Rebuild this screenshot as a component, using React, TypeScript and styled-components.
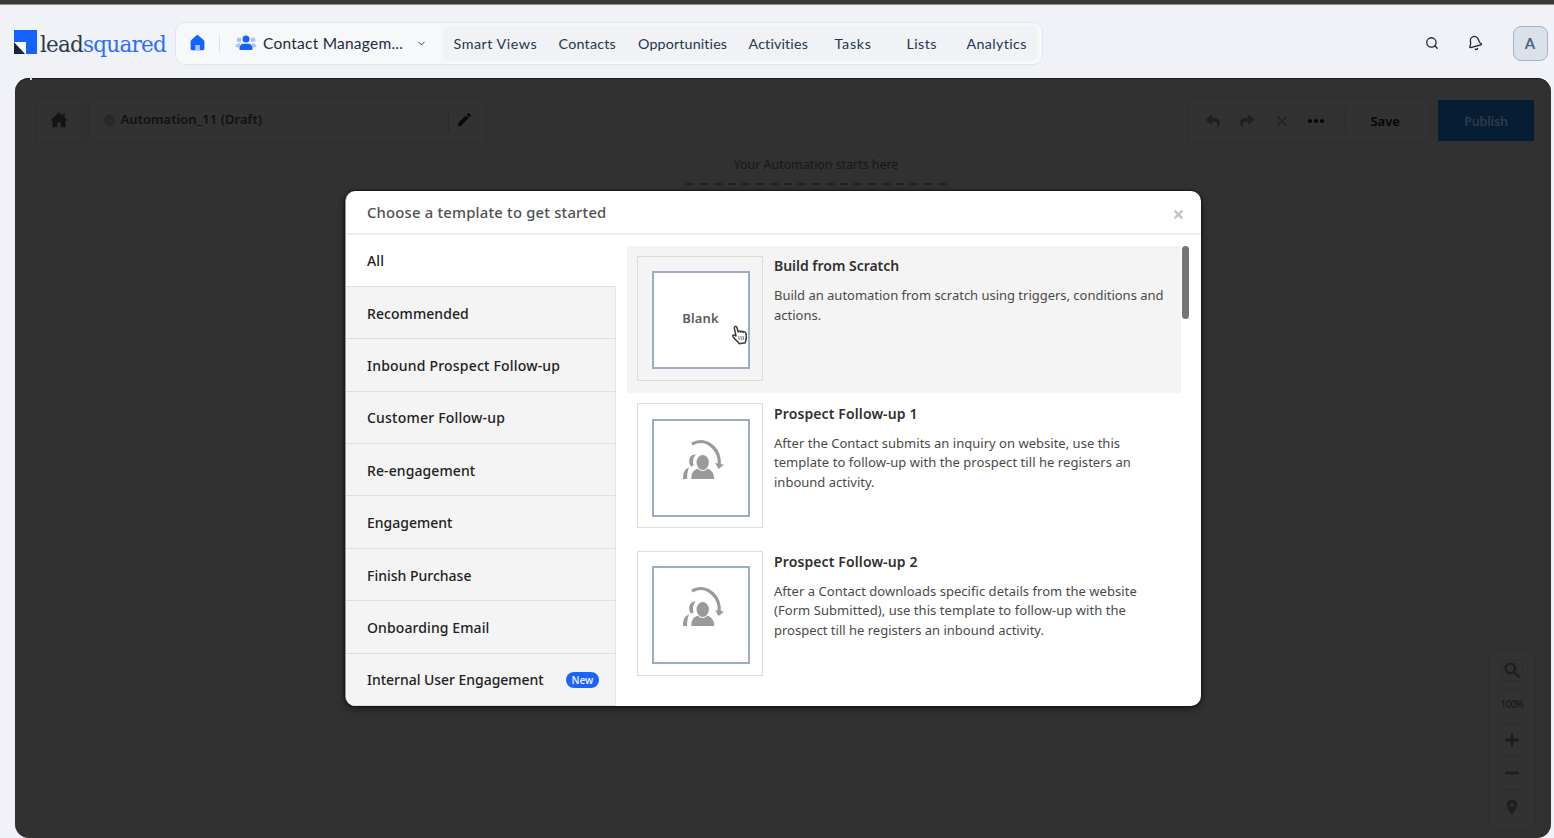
import React from "react";
import styled, { createGlobalStyle } from "styled-components";
import { FaMinus, FaPlus, FaReply, FaShare, FaTimes } from "react-icons/fa";
import { MdClose, MdEdit, MdLocationOn, MdMoreHoriz, MdSearch } from "react-icons/md";
import { Bell, ChevronDown, Search } from "lucide-react";

const GlobalStyle = createGlobalStyle`
  *, *::before, *::after { box-sizing: border-box; }
  body {
    margin: 0;
    background: #f0f2f7;
    font-family: "Noto Sans", sans-serif;
    overflow: hidden;
  }
  svg { display: block; flex: none; }
`;

const Page = styled.div`
  position: relative;
  display: flex;
  flex-direction: column;
  width: 1554px;
  height: 838px;
  background: #f0f2f7;
  border-top: 4px solid #3a3839;
  box-shadow: inset 0 1px 0 #8b8d8f;
`;

const Header = styled.header`
  display: flex;
  align-items: center;
  height: 73.5px;
  padding: 5px 6.5px 0 14px;
`;

const Logo = styled.div`
  display: flex;
  align-items: center;
  width: 161px;
  height: 44px;
  padding-bottom: 3px;
`;

const Wordmark = styled.span`
  margin: 6px 0 0 3px;
  font: 21.5px/26px "DejaVu Serif", serif;
  letter-spacing: -0.77px;
  white-space: nowrap;
  color: #2c3a4c;
  em { font-style: normal; color: #2d6ef7; }
`;

const NavBar = styled.nav`
  display: flex;
  align-items: center;
  width: 868px;
  height: 43px;
  padding: 0 4px 0 14px;
  border: 1.5px solid #e0e5ee;
  border-radius: 10px;
  background: #f7f8fa;
  font-family: Lato, "Noto Sans", sans-serif;
  color: #1e2a3c;
`;

const NavSeparator = styled.span`
  width: 1px;
  height: 17px;
  margin: 0 15px 0 14px;
  background: #dadfe9;
`;

const Workspace = styled.span`
  width: 142px;
  margin: 0 11px 0 6px;
  font-size: 15.5px;
  letter-spacing: 0.24px;
  white-space: nowrap;
`;

const NavLinks = styled.div`
  display: flex;
  align-items: center;
  width: 596px;
  height: 35px;
  margin-left: auto;
  padding: 0 0 0 11.5px;
  border-radius: 6px;
  background: #f0f2f6;
`;

const NavLink = styled.a<{ $width: number; $spacing: number }>`
  width: ${(p) => p.$width}px;
  font-size: 14.3px;
  letter-spacing: ${(p) => p.$spacing}px;
  white-space: nowrap;
  color: #26364b;
`;

const HeaderActions = styled.div`
  display: flex;
  align-items: center;
  gap: 28px;
  margin-left: auto;
  color: #1a2536;
`;

const BellTilt = styled.span`
  transform: rotate(-14deg);
`;

const Avatar = styled.div`
  display: flex;
  align-items: center;
  justify-content: center;
  width: 35px;
  height: 35px;
  margin-left: 2px;
  border: 1.5px solid #a3b3c8;
  border-radius: 8px;
  background: #d9e1ea;
  font: 700 15px Lato, sans-serif;
  color: #4d6485;
`;

const Canvas = styled.main`
  position: relative;
  display: flex;
  flex-direction: column;
  width: 1536.5px;
  height: 760.5px;
  margin-left: 14.5px;
  padding: 22px 17px 10px 22px;
  border-radius: 14px;
  background: #313131;
  box-shadow: inset 0 1px 1px #1e1e1e;
  color: #1b1b1b;
`;

const Notch = styled.span`
  position: absolute;
  top: -1px;
  left: 15.5px;
  width: 2px;
  height: 3px;
  background: #d5d6d8;
`;

const Toolbar = styled.div`
  display: flex;
  align-items: flex-start;
`;

const DarkBox = styled.div<{ $width: number }>`
  display: flex;
  align-items: center;
  width: ${(p) => p.$width}px;
  height: 42px;
  background: #323232;
  box-shadow: 0 0 2px #292929;
`;

const HomeBox = styled(DarkBox)`
  justify-content: center;
  margin-right: 9px;
  padding-bottom: 2px;
`;

const NameBox = styled(DarkBox)`
  padding-left: 14px;
`;

const StatusDot = styled.span`
  width: 11px;
  height: 11px;
  margin-right: 6px;
  border: 1px solid #252525;
  border-radius: 50%;
  background: #292929;
`;

const AutomationName = styled.span`
  flex: 1;
  font-size: 13px;
  font-weight: 600;
  letter-spacing: 0.05px;
  padding-bottom: 3px;
  color: #111;
`;

const Divider = styled.span<{ $height: number }>`
  width: 1px;
  height: ${(p) => p.$height}px;
  background: #282828;
`;

const PencilSlot = styled.span`
  width: 36px;
  padding: 0 0 3px 7px;
  color: #090909;
`;

const ActionBox = styled(DarkBox)`
  margin-left: auto;
  padding-left: 7px;
  color: #202020;
`;

const ActionIcon = styled.span<{ $strong?: boolean }>`
  display: flex;
  justify-content: center;
  width: 34.3px;
  padding-top: 1px;
  color: ${(p) => (p.$strong ? "#050505" : "inherit")};
`;

const MenuDivider = styled(Divider)`
  margin-left: 12px;
`;

const SaveButton = styled.button`
  width: 78px;
  padding: 0;
  border: 0;
  background: none;
  font: 600 13px "Noto Sans", sans-serif;
  letter-spacing: 0;
  color: #050505;
`;

const PublishButton = styled.button`
  width: 96px;
  height: 41px;
  margin-left: 10px;
  padding: 2px 0 0;
  border: 0;
  background: #071d33;
  font: 600 12.5px "Noto Sans", sans-serif;
  letter-spacing: -0.15px;
  color: #2d3b49;
`;

const StartArea = styled.div`
  display: flex;
  flex-direction: column;
  align-items: center;
  width: 261px;
  margin: 14px 0 0 649px;
  font-size: 12.5px;
  line-height: 18px;
  letter-spacing: -0.05px;
  color: #171717;
`;

const StartSlot = styled.div`
  width: 261px;
  height: 40px;
  margin-top: 9.5px;
  background: repeating-linear-gradient(90deg, #202020 0 8px, transparent 8px 14px) 0 0 / 100% 2px no-repeat;
`;

const ZoomBox = styled.div`
  display: flex;
  flex-direction: column;
  align-items: center;
  justify-content: space-between;
  align-self: flex-end;
  width: 44px;
  height: 178px;
  margin-top: auto;
  padding: 10px 0 12px;
  background: #323232;
  box-shadow: 0 0 2px #292929;
  color: #1e1e1e;
`;

const ZoomRule = styled.span`
  width: 16px;
  height: 1px;
  background: #2b2b2b;
`;

const ZoomLevel = styled.span`
  padding-bottom: 4px;
  font-size: 10px;
  line-height: 13px;
  letter-spacing: -0.6px;
  color: #151515;
`;

const Modal = styled.section`
  position: absolute;
  top: 186.5px;
  left: 345px;
  display: flex;
  flex-direction: column;
  width: 855.5px;
  height: 515.5px;
  border-left: 1px solid #999;
  border-radius: 10px;
  background: #fff;
  box-shadow: 0 0 3px #000, 0 3px 8px rgba(0, 0, 0, 0.4);
  overflow: hidden;
`;

const ModalHeader = styled.div`
  display: flex;
  align-items: center;
  justify-content: space-between;
  height: 44px;
  padding: 0 16px 0 21px;
  border-bottom: 2px solid #ededed;
  color: #c4c4c4;
`;

const ModalTitle = styled.h1`
  margin: 1px 0 0;
  font-size: 14.8px;
  font-weight: 500;
  letter-spacing: 0.2px;
  color: #505050;
`;

const CloseSlot = styled.span`
  padding-top: 6px;
`;

const ModalBody = styled.div`
  display: flex;
  flex: 1;
  min-height: 0;
`;

const Categories = styled.ul`
  display: grid;
  grid-auto-rows: 1fr;
  width: 270px;
  margin: 0;
  padding: 0;
  list-style: none;
`;

const Category = styled.li<{ $active?: boolean; $spacing: number }>`
  display: flex;
  align-items: center;
  justify-content: space-between;
  padding: 1px 16px 0 21px;
  border-right: 1px solid ${(p) => (p.$active ? "#fff" : "#e4e4e4")};
  border-bottom: 1px solid #dedede;
  background: ${(p) => (p.$active ? "#fff" : "#f4f4f4")};
  font-size: 14px;
  font-weight: 500;
  letter-spacing: ${(p) => p.$spacing}px;
  white-space: nowrap;
  color: #222;
`;

const NewBadge = styled.span`
  width: 33px;
  height: 16px;
  border-radius: 8px;
  background: #1c64f9;
  font-size: 10px;
  font-weight: 600;
  line-height: 16px;
  text-align: center;
  color: #e4edff;
`;

const Templates = styled.div`
  flex: 1;
  display: flex;
  align-items: flex-start;
  padding: 11px 0 0 11px;
`;

const TemplateList = styled.div`
  width: 554px;
`;

const ScrollThumb = styled.span`
  width: 7px;
  height: 73px;
  margin-left: 0.5px;
  border-radius: 4px;
  background: #757575;
`;

const Template = styled.article<{ $active?: boolean }>`
  display: flex;
  height: 147px;
  margin-bottom: 0.7px;
  padding: 10px 0 0 10px;
  background: ${(p) => (p.$active ? "#f4f4f4" : "#fff")};
`;

const Thumb = styled.div`
  display: flex;
  align-items: center;
  justify-content: center;
  flex: none;
  width: 126px;
  height: 125px;
  margin-right: 11px;
  padding: 4px 0 0 1px;
  border: 1px solid #dcdcdc;
`;

const ThumbFrame = styled.div`
  position: relative;
  display: flex;
  align-items: center;
  justify-content: center;
  width: 98px;
  height: 98px;
  border: 2px solid #9aadc4;
  background: #fff;
  font-size: 13px;
  font-weight: 600;
  letter-spacing: 0.1px;
  padding-bottom: 4px;
  color: #5c5c5c;
`;

const PeopleSlot = styled.span`
  padding: 0 0 12px 6px;
`;

const PointerSlot = styled.span`
  position: absolute;
  top: 52px;
  left: 77px;
`;

const TemplateText = styled.div`
  padding-top: 0.9px;
`;

const TemplateTitle = styled.h2<{ $spacing: number }>`
  margin: 0 0 10px;
  font-size: 14px;
  font-weight: 600;
  line-height: 20px;
  letter-spacing: ${(p) => p.$spacing}px;
  color: #303030;
`;

const Line = styled.span<{ $spacing: number }>`
  display: block;
  font-size: 13px;
  line-height: 19.4px;
  letter-spacing: ${(p) => p.$spacing}px;
  white-space: nowrap;
  color: #4a4a4a;
`;

const LogoMark = () => (
  <svg width="23" height="24" viewBox="0 0 23 24">
    <path d="M0 0h23v24H12V12H0z" fill="#1463ff" />
    <path d="M0 12l11 12H0z" fill="#13263a" />
    <path d="M0 12h12v12z" fill="#fff" />
  </svg>
);

const HomeIcon = () => (
  <svg width="15" height="16" viewBox="0 0 15 16">
    <path d="M6 .8a2 2 0 0 1 2.8 0L13.6 5c.5.5.8 1 .8 1.600v7.200c0 .8-.6 1.400-1.400 1.400H2A1.400 1.400 0 0 1 .6 13.800V6.600c0-.6.3-1.100.8-1.600z" fill="#1463ff" />
    <path d="M5.300 10h4.600v5.200H5.300z" fill="#a6c4ff" />
  </svg>
);

const SolidHomeIcon = () => (
  <svg width="18" height="16" viewBox="0 0 18 16">
    <path d="M9 .5l3.700 3.400V1.800h2v4L17.700 8.600h-2.200v6.600h-4.700v-4.700H7.200v4.700H2.500V8.600H.3z" fill="#141414" />
  </svg>
);

const TeamIcon = () => (
  <svg width="22" height="16" viewBox="0 0 22 16">
    <g fill="#a9c3fd">
      <circle cx="4" cy="4.800" r="2.400" />
      <circle cx="18" cy="4.800" r="2.400" />
      <path d="M.6 12.300c0-2.700 1.500-4 4.400-4v4zM21.400 12.300c0-2.700-1.500-4-4.400-4v4z" />
    </g>
    <circle cx="11" cy="4" r="3.500" fill="#1463ff" />
    <path d="M4.400 13.700c0-3 1.600-5 4.200-5h4.800c2.600 0 4.200 2 4.200 5 0 .8-.5 1.300-1.300 1.300H5.700c-.8 0-1.300-.5-1.300-1.300z" fill="#1463ff" />
  </svg>
);

const FollowUpIcon = () => (
  <svg width="42" height="42" viewBox="0 0 42 42">
    <g fill="#9a9a9a">
      <path d="M0 40c0-6 1.500-10 6-11.500C4.500 32 4 36 4.200 40z" />
      <path d="M13 15.500C9 15 6.200 18 6.200 22c0 2.300.7 4.300 2 5.800l2.500-1.500c-1.500-4-.5-8 2.300-10.800z" />
      <ellipse cx="19.700" cy="23.500" rx="6.200" ry="7.500" />
      <path d="M8.300 40c0-6 2-9.300 6.700-10.300 2.800 3 6.600 3 9.400 0C29 31 31.200 34.500 31.200 40z" />
      <path d="M32.200 24l8.800 1.700-5.500 4.300z" />
    </g>
    <path d="M9 5c7-4 15-2.800 21 3 4.500 4.500 6.800 11 6.300 18" fill="none" stroke="#9a9a9a" strokeWidth="3.200" />
  </svg>
);

const HandPointer = () => (
  <svg width="18" height="20" viewBox="0 0 18 20">
    <path d="M5 11L3.300 3.200C3 1.200 5.300.7 5.900 2.500L7.200 7c.2-1.300 2.200-1.400 2.600 0 .4-1 2.200-.9 2.500.3.600-.8 2.300-.6 2.600.9.600 2.700 1 5.200-.300 7.800l-.3 1.800-6.300.9-1.200-1.900c-1.600-1.200-3.200-3-4.800-5.100-.8-1.400.7-2.300 1.900-1.300z" fill="#fff" stroke="#3b3b3b" strokeWidth="1.500" strokeLinejoin="round" />
    <path d="M7.700 11l.5 4M10 11l.4 4M12.200 11l.2 4" stroke="#555" strokeWidth=".8" />
  </svg>
);

const navLinks = [
  { label: "Smart Views", width: 105, spacing: 0.53 },
  { label: "Contacts", width: 79.5, spacing: 0.22 },
  { label: "Opportunities", width: 110.5, spacing: 0.13 },
  { label: "Activities", width: 86, spacing: 0.15 },
  { label: "Tasks", width: 72, spacing: 0.75 },
  { label: "Lists", width: 60, spacing: 0.4 },
  { label: "Analytics", width: 64, spacing: 0.37 },
];

const categories = [
  { label: "All", spacing: 0.2 },
  { label: "Recommended", spacing: 0.07 },
  { label: "Inbound Prospect Follow-up", spacing: 0.2 },
  { label: "Customer Follow-up", spacing: 0.21 },
  { label: "Re-engagement", spacing: 0.1 },
  { label: "Engagement", spacing: 0 },
  { label: "Finish Purchase", spacing: 0 },
  { label: "Onboarding Email", spacing: 0.1 },
  { label: "Internal User Engagement", spacing: -0.03, isNew: true },
];

const templates = [
  {
    title: "Build from Scratch",
    spacing: -0.02,
    blank: true,
    lines: [
      { text: "Build an automation from scratch using triggers, conditions and", spacing: -0.02 },
      { text: "actions.", spacing: 0 },
    ],
  },
  {
    title: "Prospect Follow-up 1",
    spacing: 0.12,
    lines: [
      { text: "After the Contact submits an inquiry on website, use this", spacing: 0.02 },
      { text: "template to follow-up with the prospect till he registers an", spacing: 0.05 },
      { text: "inbound activity.", spacing: 0 },
    ],
  },
  {
    title: "Prospect Follow-up 2",
    spacing: 0.12,
    lines: [
      { text: "After a Contact downloads specific details from the website", spacing: 0.04 },
      { text: "(Form Submitted), use this template to follow-up with the", spacing: 0.06 },
      { text: "prospect till he registers an inbound activity.", spacing: 0 },
    ],
  },
];

export default function App() {
  return (
    <>
      <GlobalStyle />
      <Page>
        <Header>
          <Logo>
            <LogoMark />
            <Wordmark>lead<em>squared</em></Wordmark>
          </Logo>
          <NavBar>
            <HomeIcon />
            <NavSeparator />
            <TeamIcon />
            <Workspace>Contact Managem...</Workspace>
            <ChevronDown size={11} />
            <NavLinks>
              {navLinks.map((l) => (
                <NavLink key={l.label} $width={l.width} $spacing={l.spacing}>{l.label}</NavLink>
              ))}
            </NavLinks>
          </NavBar>
          <HeaderActions>
            <Search size={14} strokeWidth={2.2} />
            <BellTilt><Bell size={16} strokeWidth={2} /></BellTilt>
            <Avatar>A</Avatar>
          </HeaderActions>
        </Header>
        <Canvas>
          <Notch />
          <Toolbar>
            <HomeBox $width={44}><SolidHomeIcon /></HomeBox>
            <NameBox $width={395}>
              <StatusDot />
              <AutomationName>Automation_11 (Draft)</AutomationName>
              <Divider $height={20} />
              <PencilSlot><MdEdit size={17} /></PencilSlot>
            </NameBox>
            <ActionBox $width={239}>
              <ActionIcon><FaReply size={14} /></ActionIcon>
              <ActionIcon><FaShare size={14} /></ActionIcon>
              <ActionIcon><MdClose size={18} /></ActionIcon>
              <ActionIcon $strong><MdMoreHoriz size={24} /></ActionIcon>
              <MenuDivider $height={27} />
              <SaveButton>Save</SaveButton>
            </ActionBox>
            <PublishButton>Publish</PublishButton>
          </Toolbar>
          <StartArea>
            Your Automation starts here
            <StartSlot />
          </StartArea>
          <ZoomBox>
            <MdSearch size={21} stroke="currentColor" strokeWidth={0.5} />
            <ZoomRule />
            <ZoomLevel>100%</ZoomLevel>
            <ZoomRule />
            <FaPlus size={16} />
            <ZoomRule />
            <FaMinus size={16} />
            <ZoomRule />
            <MdLocationOn size={18} />
          </ZoomBox>
        </Canvas>
        <Modal>
          <ModalHeader>
            <ModalTitle>Choose a template to get started</ModalTitle>
            <CloseSlot><FaTimes size={13} /></CloseSlot>
          </ModalHeader>
          <ModalBody>
            <Categories>
              {categories.map((c, i) => (
                <Category key={c.label} $active={i === 0} $spacing={c.spacing}>
                  {c.label}
                  {c.isNew && <NewBadge>New</NewBadge>}
                </Category>
              ))}
            </Categories>
            <Templates>
              <TemplateList>
                {templates.map((t) => (
                  <Template key={t.title} $active={t.blank}>
                    <Thumb>
                      <ThumbFrame>
                        {t.blank ? "Blank" : <PeopleSlot><FollowUpIcon /></PeopleSlot>}
                        {t.blank && <PointerSlot><HandPointer /></PointerSlot>}
                      </ThumbFrame>
                    </Thumb>
                    <TemplateText>
                      <TemplateTitle $spacing={t.spacing}>{t.title}</TemplateTitle>
                      {t.lines.map((l) => (
                        <Line key={l.text} $spacing={l.spacing}>{l.text}</Line>
                      ))}
                    </TemplateText>
                  </Template>
                ))}
              </TemplateList>
              <ScrollThumb />
            </Templates>
          </ModalBody>
        </Modal>
      </Page>
    </>
  );
}
